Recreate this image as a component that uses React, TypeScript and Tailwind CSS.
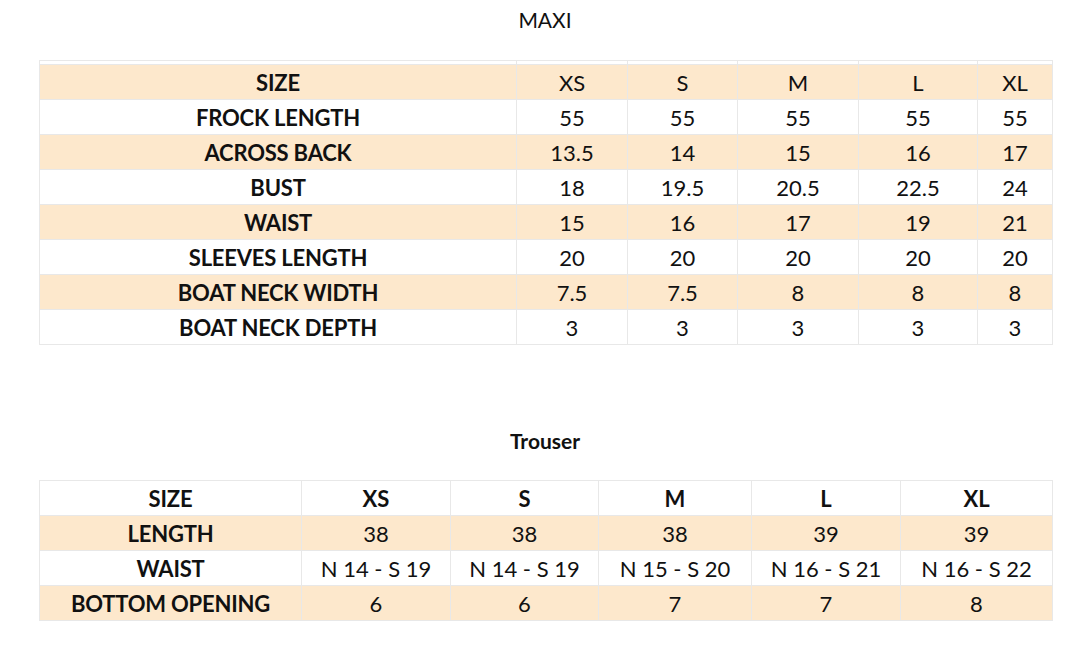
import React from "react";

const maxiCols = [477, 111, 110, 121, 119, 75];
const maxiRows: [string, string[]][] = [
  ["SIZE", ["XS", "S", "M", "L", "XL"]],
  ["FROCK LENGTH", ["55", "55", "55", "55", "55"]],
  ["ACROSS BACK", ["13.5", "14", "15", "16", "17"]],
  ["BUST", ["18", "19.5", "20.5", "22.5", "24"]],
  ["WAIST", ["15", "16", "17", "19", "21"]],
  ["SLEEVES LENGTH", ["20", "20", "20", "20", "20"]],
  ["BOAT NECK WIDTH", ["7.5", "7.5", "8", "8", "8"]],
  ["BOAT NECK DEPTH", ["3", "3", "3", "3", "3"]],
];

const trCols = [262, 149, 148, 153, 149, 152];
const trRows: [string, string[]][] = [
  ["SIZE", ["XS", "S", "M", "L", "XL"]],
  ["LENGTH", ["38", "38", "38", "39", "39"]],
  ["WAIST", ["N 14 - S 19", "N 14 - S 19", "N 15 - S 20", "N 16 - S 21", "N 16 - S 22"]],
  ["BOTTOM OPENING", ["6", "6", "7", "7", "8"]],
];

export default function App() {
  return (
    <div
      className="w-[1090px] h-[646px] bg-white text-[#111] overflow-hidden"
      style={{ fontFamily: "Lato, 'Noto Sans', sans-serif" }}
    >
      <div className="h-[40px] leading-[40px] text-center text-[21px] font-normal">MAXI</div>
      <div className="mt-[20px] pl-[39px]">
        <table className="table-fixed border-collapse w-[1013px]">
          <colgroup>
            {maxiCols.map((w, i) => (
              <col key={i} style={{ width: w }} />
            ))}
          </colgroup>
          <tbody>
            <tr>
              {maxiCols.map((_, i) => (
                <td key={i} className="h-[4px] p-0 border border-[#e8e8e8]"></td>
              ))}
            </tr>
            {maxiRows.map(([label, vals], r) => (
              <tr key={label} className={r % 2 === 0 ? "bg-[#fde8cc]" : "bg-white"}>
                <td className="h-[35px] p-0 pt-[2px] border border-[#e8e8e8] text-center text-[22px] font-bold leading-none tracking-[-0.2px]">
                  {label}
                </td>
                {vals.map((v, i) => (
                  <td
                    key={i}
                    className="h-[35px] p-0 pt-[2px] border border-[#e8e8e8] text-center text-[22px] font-normal leading-none"
                  >
                    {v}
                  </td>
                ))}
              </tr>
            ))}
          </tbody>
        </table>
      </div>
      <div className="mt-[76px] h-[40px] leading-[40px] text-center text-[21px] font-bold">Trouser</div>
      <div className="mt-[19px] pl-[39px]">
        <table className="table-fixed border-collapse w-[1013px]">
          <colgroup>
            {trCols.map((w, i) => (
              <col key={i} style={{ width: w }} />
            ))}
          </colgroup>
          <tbody>
            {trRows.map(([label, vals], r) => (
              <tr key={label} className={r % 2 === 1 ? "bg-[#fde8cc]" : "bg-white"}>
                <td className="h-[35px] p-0 pt-[2px] border border-[#e8e8e8] text-center text-[22px] font-bold leading-none tracking-[-0.2px]">
                  {label}
                </td>
                {vals.map((v, i) => (
                  <td
                    key={i}
                    className={
                      "h-[35px] p-0 pt-[2px] border border-[#e8e8e8] text-center text-[22px] leading-none " +
                      (r === 0 ? "font-bold" : "font-normal")
                    }
                  >
                    {v}
                  </td>
                ))}
              </tr>
            ))}
          </tbody>
        </table>
      </div>
    </div>
  );
}
